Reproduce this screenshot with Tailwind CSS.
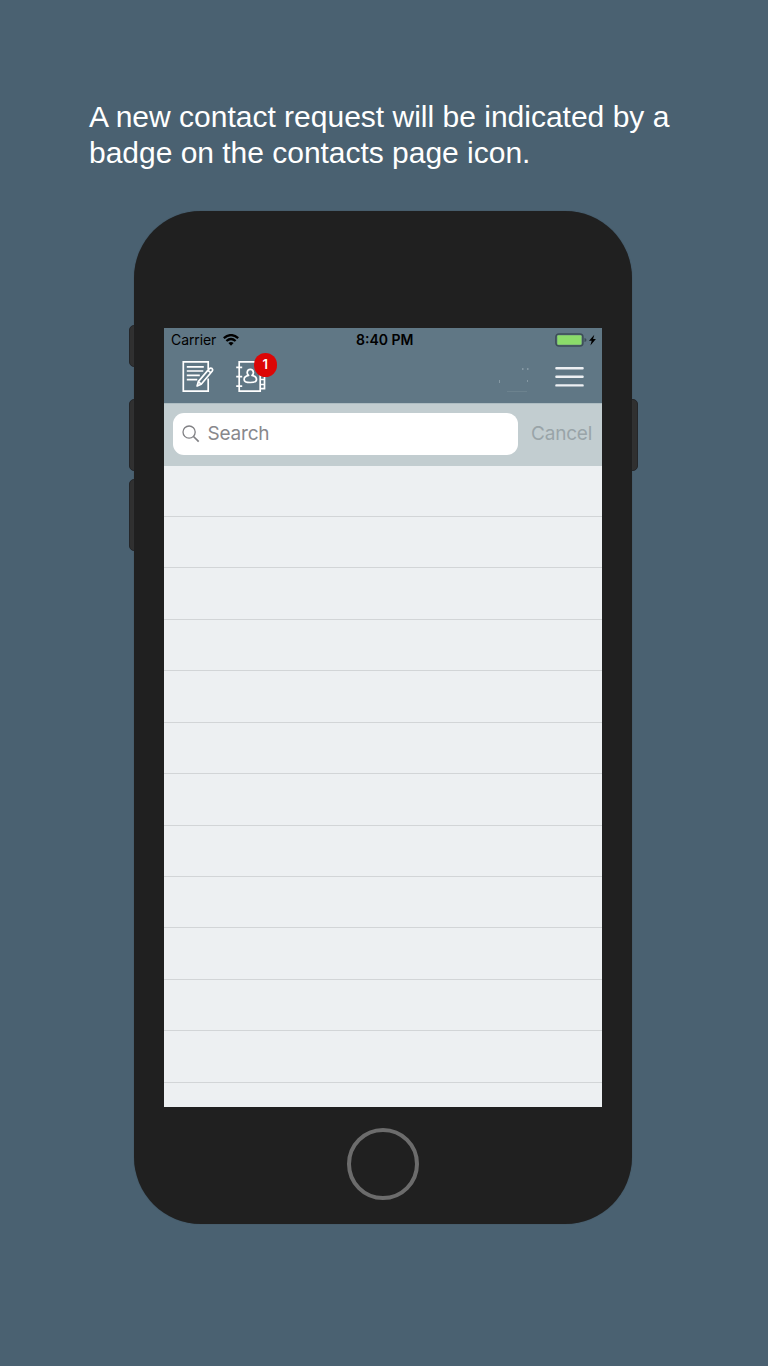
<!DOCTYPE html>
<html lang="en">
<head>
<meta charset="utf-8">
<meta name="viewport" content="width=device-width, initial-scale=1">
<title>Contacts</title>
<script src="https://cdn.jsdelivr.net/npm/@tailwindcss/browser@4"></script>
</head>
<body class="h-[1366px] w-[768px] overflow-hidden bg-[#4a6171] font-[Inter,sans-serif]">
<main class="flex h-full flex-col">
  <h1 class="h-[211px] pt-[99px] pl-[89px] font-['Liberation_Sans',Arial,sans-serif] text-[30px] leading-[36px] font-normal whitespace-nowrap text-white"><span>A new contact request will be indicated by a</span><br><span class="tracking-[-0.02px]">badge on the contacts page icon.</span></h1>

  <div class="relative ml-[134px] h-[1013px] w-[498px]">
    <!-- side buttons -->
    <div class="absolute top-[114px] -left-[5.5px] h-[42px] w-4 rounded-[5px] border border-[#242629] bg-[#303030]"></div>
    <div class="absolute top-[188px] -left-[5.5px] h-[72px] w-4 rounded-[5px] border border-[#242629] bg-[#303030]"></div>
    <div class="absolute top-[268px] -left-[5.5px] h-[72px] w-4 rounded-[5px] border border-[#242629] bg-[#303030]"></div>
    <div class="absolute top-[188px] -right-[5.5px] h-[72px] w-4 rounded-[5px] border border-[#242629] bg-[#303030]"></div>

    <div class="relative flex h-full flex-col rounded-[67px] bg-[#202020] px-[30px] pt-[117px] shadow-[0_0_1px_0_#34434d]">
      <div class="h-[779px] w-[438px] overflow-hidden bg-[#edf0f2]">
        <header class="h-[75px] bg-[#607785]">
          <div class="grid h-6 grid-cols-3 items-center text-black">
            <div class="flex items-center pl-[7px] text-[14px]"><span class="mt-[-2px] w-[52px] tracking-[-0.1px]">Carrier</span>
              <svg class="mt-[-1px] h-3 w-4" viewBox="0 0 16 12" fill="none" stroke="#000" stroke-width="2.3"><path d="M.8 4.2Q8-2 15.2 4.2M3.4 7Q8 3 12.6 7"/><path d="M5.4 9.1Q8 7 10.6 9.1L8 11.7Z" fill="#000" stroke="none"/></svg>
            </div>
            <div class="mt-[-2px] pl-[46px] text-[14px] font-semibold whitespace-nowrap">8:40 PM</div>
            <div class="flex justify-end pr-[5px]">
              <svg class="mt-[-1px] h-[14px] w-[42px]" viewBox="0 0 42 14"><rect x=".9" y=".9" width="27" height="12.2" rx="3" fill="#607785" stroke="#3d4d57" stroke-width="1.5"/><rect x="2.3" y="2.3" width="24.2" height="9.4" rx="1" fill="#8bdc6a"/><path d="M29.5 5q2 .3 2 2t-2 2Z" fill="#3d4d57"/><path d="m39.3 1.8-5.3 6h2.7l-1.3 4.7 5.5-6.4h-2.8Z" fill="#000"/></svg>
            </div>
          </div>
          <div class="flex h-[51px] items-center pr-[18px] pl-[18px]">
            <svg class="mt-[-3px] h-8 w-8" viewBox="0 0 32 32" fill="none" stroke="#fff" stroke-width="1.7"><path d="M26.2 9V1.9H1.3v29.3h24.9V18.5"/><path d="M4.8 6.8h17M4.8 11h16.5M4.8 15.4h13M4.8 19.7h10.5"/><path d="m16.3 21.6 10.8-12.7q1.6-1.4 2.9-.4 1.2 1.2.1 2.7L19.2 24.2l-4.1 1.8ZM26 10.3l2.7 2.4M16.3 21.6l2.9 2.6" stroke-linejoin="round"/></svg>
            <div class="relative ml-[21px] mt-[-3px] h-8 w-8">
              <svg class="h-8 w-8" viewBox="0 0 32 32" fill="none" stroke="#fff" stroke-width="1.7"><path d="M4.2 1.9h21v29.2h-21Z"/><path d="M1.2 7.4h6M1.2 16.7h6M1.2 26.1h6"/><path d="M25.2 15.5h4.3v4h-4.3M29.5 19.5v5h-4.3M29.5 24.5v4.1h-4.3"/><path d="M13.6 15.4q-1.5-1.2-1.4-3 .2-3 3.1-3t3.1 3q.1 1.8-1.4 3 4.5.8 4.5 4 0 3.1-6.2 3.1t-6.2-3.1q0-3.2 4.5-4Z" stroke-linejoin="round"/></svg>
              <span class="absolute -top-[7px] left-[18.5px] flex size-[23.5px] items-center justify-center rounded-full bg-[#dc0606] text-[13px] leading-none font-semibold text-white">1</span>
            </div>
            <!-- faint fragments beside the menu -->
            <svg class="ml-auto h-[30px] w-8" viewBox="0 0 32 30"><g fill="#91a3ad"><path d="M2 17h1v3H2zM25 5h1.5v2H25zM30 5h1.5v2H30zM30 17h1v2h-1z" opacity=".75"/><path d="M10 28h20v1H10z" opacity=".25"/></g></svg>
            <svg class="mt-[-2px] ml-[26px] h-[22px] w-[29px]" viewBox="0 0 29 22" stroke="#edf0f3" stroke-width="2.4" stroke-linecap="round"><path d="M1.4 2.2h26.2M1.4 10.8h26.2M1.4 19.4h26.2"/></svg>
          </div>
        </header>

        <div class="flex h-[62.5px] items-start border-t border-[#aebdc2] bg-[#c2cdd0] pt-[9px] pl-[9px]">
          <div class="flex h-[42px] w-[345px] items-center rounded-[11px] bg-white pl-[9px]">
            <svg class="mt-[-1px] h-[18px] w-[18px]" viewBox="0 0 18 18" fill="none" stroke="#808084" stroke-width="1.3"><circle cx="7.1" cy="7.1" r="6.1"/><path d="m11.5 11.5 5.2 5.2" stroke-width="1.7"/></svg>
            <span class="ml-[7.5px] text-[19px] tracking-[-0.2px] text-[#88888c]">Search</span>
          </div>
          <span class="ml-[13px] text-[19px] leading-[42px] tracking-[-0.2px] text-[#99a4a8]">Cancel</span>
        </div>

        <ul class="[&>li]:h-[51.45px] [&>li]:border-b [&>li]:border-[#d2d5d7]">
          <li></li><li></li><li></li><li></li><li></li><li></li><li></li><li></li><li></li><li></li><li></li><li></li>
        </ul>
      </div>
      <div class="mx-auto mt-[21px] size-[72px] rounded-full border-[4px] border-[#6c6c6c]"></div>
    </div>
  </div>
</main>
</body>
</html>
